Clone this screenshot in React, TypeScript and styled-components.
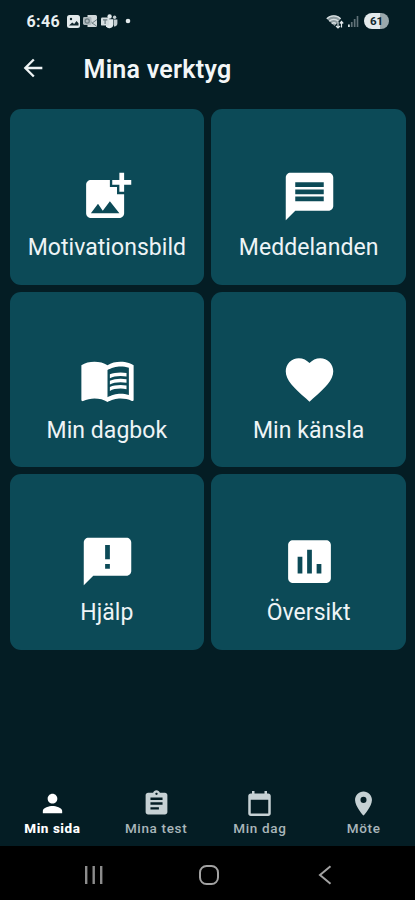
import React from 'react';
import styled, { createGlobalStyle } from 'styled-components';
import {
  MdAddPhotoAlternate,
  MdAnnouncement,
  MdArrowBack,
  MdAssessment,
  MdAssignment,
  MdFavorite,
  MdMenuBook,
  MdMessage,
  MdPerson,
  MdPlace,
} from 'react-icons/md';

const GlobalStyle = createGlobalStyle`
  * { box-sizing: border-box; }
  body {
    margin: 0;
    background: #041d24;
    font-family: Roboto, "Liberation Sans", sans-serif;
  }
`;

const Screen = styled.div`
  width: 415px;
  height: 900px;
  display: flex;
  flex-direction: column;
  overflow: hidden;
  background: #041d24;
  color: #fff;
`;

const StatusBar = styled.div`
  height: 42px;
  flex: none;
  display: flex;
  align-items: center;
  justify-content: space-between;
  padding: 0 26px 0 26.5px;
`;

const StatusGroup = styled.div`
  display: flex;
  align-items: center;
  gap: 3px;
`;

const Clock = styled.span`
  width: 34px;
  margin-right: 3.5px;
  padding-top: 1px;
  font-size: 16px;
  font-weight: 700;
  line-height: 20px;
  letter-spacing: 0.4px;
  white-space: nowrap;
  color: #e9eff1;
`;

const Battery = styled.span`
  width: 25px;
  height: 16px;
  margin-left: 2px;
  border-radius: 8px;
  display: flex;
  align-items: center;
  justify-content: center;
  background: linear-gradient(90deg, #e3eaec 62%, #9aa8ac 62%);
  color: #10272e;
  font-size: 11.5px;
  font-weight: 700;
`;

const Header = styled.header`
  height: 67px;
  flex: none;
  display: flex;
  align-items: center;
  padding: 0 0 15px 18.5px;
`;

const BackButton = styled.button`
  width: 28px;
  height: 28px;
  padding: 0;
  border: 0;
  background: none;
  color: #eef3f4;
  font-size: 28px;
  display: flex;
`;

const Title = styled.h1`
  margin: 4px 0 0 37px;
  font-size: 25px;
  font-weight: 600;
  line-height: 30px;
  letter-spacing: 0.25px;
  color: #f3f6f7;
`;

const Grid = styled.main`
  flex: 1;
  padding: 0 9px 0 9.5px;
  display: grid;
  grid-template-columns: 1fr 1fr;
  grid-auto-rows: 175.5px;
  gap: 7px;
`;

const Card = styled.button`
  border: 0;
  border-radius: 11px;
  padding: 59px 0 0;
  background: #0c4a57;
  color: #fff;
  font-family: inherit;
  font-size: 57px;
  display: flex;
  flex-direction: column;
  align-items: center;

  svg {
    margin-left: 1px;
  }
`;

const CardLabel = styled.span`
  margin-top: 8px;
  font-size: 23px;
  line-height: 30px;
  letter-spacing: 0.05px;
  white-space: nowrap;
  color: #eef4f6;
`;

const TabBar = styled.nav`
  height: 61px;
  flex: none;
  display: grid;
  grid-template-columns: repeat(4, 1fr);
`;

const Tab = styled.button<{ $active?: boolean }>`
  border: 0;
  padding: 4px 0 0 1px;
  background: none;
  font-family: inherit;
  display: flex;
  flex-direction: column;
  align-items: center;
  color: ${(p) => (p.$active ? '#ffffff' : '#c6d1d4')};
  font-weight: ${(p) => (p.$active ? 800 : 500)};

  svg {
    width: 29px;
    height: 29px;
    flex: none;
  }
`;

const TabLabel = styled.span<{ $active?: boolean }>`
  margin-top: 1px;
  font-size: 13.5px;
  line-height: 18px;
  letter-spacing: ${(p) => (p.$active ? '0.55px' : '0.65px')};
  white-space: nowrap;
  color: ${(p) => (p.$active ? '#ffffff' : '#a9b6ba')};
`;

const SystemNav = styled.div`
  height: 54px;
  flex: none;
  display: grid;
  grid-template-columns: 115px 1fr 115px;
  justify-items: center;
  align-items: center;
  padding: 3px 33px 0 36px;
  background: #000;
`;

const PhotoGlyph = () => (
  <svg width="13" height="13" viewBox="0 0 13 13">
    <rect width="13" height="13" rx="2.5" fill="#e3eaec" />
    <path d="M2 10.5 5.2 7.6l2 1.4L9.5 6l2 2.2v2.3z" fill="#12282f" />
    <circle cx="4" cy="4" r="1.2" fill="#12282f" />
  </svg>
);

const MailGlyph = () => (
  <svg width="15" height="14" viewBox="0 0 15 14">
    <path d="M4.5 1h8a1.5 1.5 0 0 1 1.5 1.5v9a1.5 1.5 0 0 1-1.5 1.5h-8z" fill="#d0d8da" />
    <path d="M6 6.5 9.5 8.8 14 5.5M9 9l4.5 3" stroke="#6b7b80" fill="none" />
    <rect y="3" width="8.5" height="8" rx="1.4" fill="#aeb9bd" />
    <circle cx="4.2" cy="7" r="2.1" fill="none" stroke="#6b7b80" strokeWidth="1.2" />
  </svg>
);

const TeamsGlyph = () => (
  <svg width="17" height="15" viewBox="0 0 17 15">
    <circle cx="8.6" cy="2.5" r="2.2" fill="#e3eaec" />
    <circle cx="13.6" cy="3.3" r="1.7" fill="#c5ced1" />
    <path d="M5 5.3h7.4v5a4 4 0 0 1-7.4 2z" fill="#e3eaec" />
    <path d="M13 5.6h3.4v4a2.8 2.8 0 0 1-3.4 2.8z" fill="#c5ced1" />
    <rect y="3.6" width="8.2" height="8" rx="1.2" fill="#d6dee0" />
    <path d="M2 5.8h4.3M4.1 5.8v4.2" stroke="#6b7b80" strokeWidth="1.2" />
  </svg>
);

const WifiGlyph = () => (
  <svg width="18" height="15" viewBox="0 0 18 15">
    <path d="M.5 4.6C4.5.2 11 .2 15 4.6L8.6 12z" fill="#8d9b9f" />
    <path
      d="M.8 4.8C4.6.9 10.8.9 14.6 4.8M3.2 7.3c2.6-2.7 6.6-2.7 9.2 0M5.8 9.7c1.2-1.2 3-1.2 4.2 0"
      stroke="#d6dee0"
      strokeWidth="1.3"
      fill="none"
    />
    <path d="M12 14V8m-2 4 2 2 2-2M15.5 7.5v6m-1.7-4 1.7-2 1.7 2" stroke="#e3eaec" strokeWidth="1.2" fill="none" />
  </svg>
);

const SignalGlyph = () => (
  <svg width="12" height="13" viewBox="0 0 12 13">
    <path d="M1 9.5h1.8V12H1z" fill="#d6dee0" />
    <path d="M3.9 7h1.7v5H3.9zM6.8 4h1.7v8H6.8zM9.7 1h1.6v11H9.7z" fill="#617278" />
  </svg>
);

const DotGlyph = () => (
  <svg width="15" height="6" viewBox="0 0 15 6">
    <circle cx="7" cy="3" r="2.3" fill="#e3eaec" />
  </svg>
);

const CalendarIcon = () => (
  <svg viewBox="0.4 0.4 23.2 23.2" fill="currentColor">
    <path d="M19 4h-1V2h-2v2H8V2H6v2H5c-1.1 0-2 .9-2 2v14c0 1.1.9 2 2 2h14c1.1 0 2-.9 2-2V6c0-1.1-.9-2-2-2zm0 16H5V9h14z" />
  </svg>
);

const RecentsGlyph = () => (
  <svg width="20" height="20" viewBox="0 0 20 20">
    <path d="M2.2 1v18M9.7 1v18M17.2 1v18" stroke="#8c8c8c" strokeWidth="2.4" />
  </svg>
);

const HomeGlyph = () => (
  <svg width="22" height="22" viewBox="0 0 22 22">
    <rect x="2" y="2" width="18" height="18" rx="6.5" fill="none" stroke="#a2a2a2" strokeWidth="2" />
  </svg>
);

const BackGlyph = () => (
  <svg width="14" height="20" viewBox="0 0 14 20">
    <path d="M12.5 1.3 2 10l10.5 8.7" fill="none" stroke="#a2a2a2" strokeWidth="2" />
  </svg>
);

const tools: { label: string; Icon: React.ElementType }[] = [
  { label: 'Motivationsbild', Icon: MdAddPhotoAlternate },
  { label: 'Meddelanden', Icon: MdMessage },
  { label: 'Min dagbok', Icon: MdMenuBook },
  { label: 'Min känsla', Icon: MdFavorite },
  { label: 'Hjälp', Icon: MdAnnouncement },
  { label: 'Översikt', Icon: MdAssessment },
];

const tabs: { label: string; Icon: React.ElementType; active?: boolean }[] = [
  { label: 'Min sida', Icon: MdPerson, active: true },
  { label: 'Mina test', Icon: MdAssignment },
  { label: 'Min dag', Icon: CalendarIcon },
  { label: 'Möte', Icon: MdPlace },
];

export default function App() {
  return (
    <Screen>
      <GlobalStyle />
      <StatusBar>
        <StatusGroup>
          <Clock>6:46</Clock>
          <PhotoGlyph />
          <MailGlyph />
          <TeamsGlyph />
          <DotGlyph />
        </StatusGroup>
        <StatusGroup>
          <WifiGlyph />
          <SignalGlyph />
          <Battery>61</Battery>
        </StatusGroup>
      </StatusBar>
      <Header>
        <BackButton aria-label="Tillbaka">
          <MdArrowBack />
        </BackButton>
        <Title>Mina verktyg</Title>
      </Header>
      <Grid>
        {tools.map(({ label, Icon }) => (
          <Card key={label}>
            <Icon />
            <CardLabel>{label}</CardLabel>
          </Card>
        ))}
      </Grid>
      <TabBar>
        {tabs.map(({ label, Icon, active }) => (
          <Tab key={label} $active={active}>
            <Icon />
            <TabLabel $active={active}>{label}</TabLabel>
          </Tab>
        ))}
      </TabBar>
      <SystemNav>
        <RecentsGlyph />
        <HomeGlyph />
        <BackGlyph />
      </SystemNav>
    </Screen>
  );
}
